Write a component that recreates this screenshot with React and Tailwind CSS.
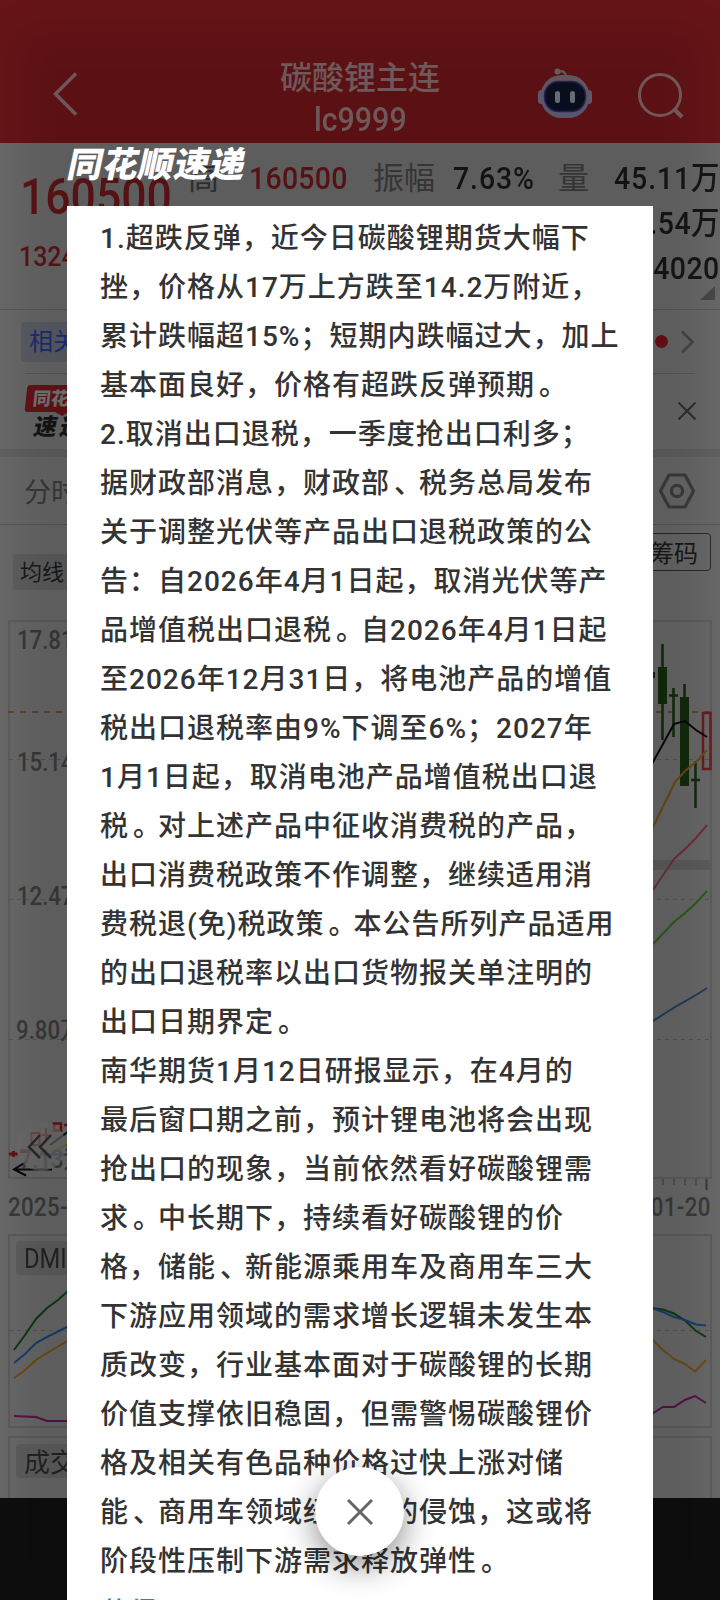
import clsx from 'clsx'

const lines = [
  '1.超跌反弹，近今日碳酸锂期货大幅下',
  '挫，价格从17万上方跌至14.2万附近，',
  '累计跌幅超15%；短期内跌幅过大，加上',
  '基本面良好，价格有超跌反弹预期。',
  '2.取消出口退税，一季度抢出口利多；',
  '据财政部消息，财政部、税务总局发布',
  '关于调整光伏等产品出口退税政策的公',
  '告：自2026年4月1日起，取消光伏等产',
  '品增值税出口退税。自2026年4月1日起',
  '至2026年12月31日，将电池产品的增值',
  '税出口退税率由9%下调至6%；2027年',
  '1月1日起，取消电池产品增值税出口退',
  '税。对上述产品中征收消费税的产品，',
  '出口消费税政策不作调整，继续适用消',
  '费税退(免)税政策。本公告所列产品适用',
  '的出口退税率以出口货物报关单注明的',
  '出口日期界定。',
  '南华期货1月12日研报显示，在4月的',
  '最后窗口期之前，预计锂电池将会出现',
  '抢出口的现象，当前依然看好碳酸锂需',
  '求。中长期下，持续看好碳酸锂的价',
  '格，储能、新能源乘用车及商用车三大',
  '下游应用领域的需求增长逻辑未发生本',
  '质改变，行业基本面对于碳酸锂的长期',
  '价值支撑依旧稳固，但需警惕碳酸锂价',
  '格及相关有色品种价格过快上涨对储',
  '能、商用车领域经济性的侵蚀，这或将',
  '阶段性压制下游需求释放弹性。',
]

const Num = ({ right, className, children }) => (
  <span
    className={clsx(
      'inline-block scale-x-[0.89] whitespace-nowrap font-medium leading-none',
      right ? 'origin-right' : 'origin-left',
      className
    )}
  >
    {children}
  </span>
)

const Robot = () => (
  <svg width="56" height="56" viewBox="0 0 56 56" fill="none">
    <defs>
      <linearGradient id="shell" x1="0" y1="0" x2="0" y2="1">
        <stop stopColor="#6e6064" />
        <stop offset="1" stopColor="#63607a" />
      </linearGradient>
    </defs>
    <path d="M20 6c6-2 9 0 9 6" stroke="#6b5f64" strokeWidth="2.5" />
    <circle cx="20.5" cy="5.5" r="3" fill="#756568" />
    <rect x="1" y="24" width="7" height="14" rx="3.5" fill="#6a647c" />
    <rect x="48" y="24" width="7" height="14" rx="3.5" fill="#6a647c" />
    <rect x="3.5" y="9" width="49" height="43" rx="21" fill="url(#shell)" />
    <rect x="7.5" y="15.5" width="41" height="30" rx="14" fill="#0b1022" stroke="#2b2660" strokeWidth="1.5" />
    <rect x="18" y="25" width="5" height="12" rx="2.5" fill="#777780" />
    <rect x="33" y="25" width="5" height="12" rx="2.5" fill="#777780" />
  </svg>
)

const Header = () => (
  <header className="h-[143px] shrink-0 bg-[#661417] pt-[60px]">
    <div className="flex h-[70px] items-start">
      <svg className="mt-3 ml-[52px]" width="28" height="44" viewBox="0 0 28 44" fill="none" stroke="#7d6062" strokeWidth="3.5">
        <path d="M24 1.5 3.5 22 24 42.5" />
      </svg>
      <div className="ml-[165px] flex w-[230px] flex-col items-center text-[#7c6365]">
        <div className="mt-px text-[32px] leading-[34px] font-medium">碳酸锂主连</div>
        <div className="mt-[8px] scale-x-[0.92] text-[33px] leading-[34px] font-medium">lc9999</div>
      </div>
      <div className="ml-[62px] mt-[6px]"><Robot /></div>
      <svg className="ml-[44px] mt-3" width="48" height="48" viewBox="0 0 48 48" fill="none" stroke="#7d6062" strokeWidth="3">
        <circle cx="23" cy="23" r="20.5" />
        <path d="m37.5 37.5 7.5 7.5" strokeWidth="4" />
      </svg>
    </div>
  </header>
)

const Quote = () => (
  <section className="flex h-[167px] shrink-0 border-b border-[#585858]">
    <div className="w-[188px] shrink-0 text-[#5f1417]">
      <Num className="mt-[29px] ml-[20px] text-[50px]">160500</Num>
      <Num className="mt-[21px] ml-[19px] text-[28px]">1324</Num>
    </div>
    <div className="flex min-w-0 flex-1 flex-col pt-[18px] text-[32px] text-[#161616]">
      <div className="flex h-[34px] items-center leading-none">
        <span className="w-[61px] shrink-0 text-[31px] text-[#343434]">高</span>
        <Num className="w-[124px] shrink-0 tracking-[0.3px] text-[#5f1417]">160500</Num>
        <span className="w-[80px] shrink-0 text-[31px] text-[#3c3c3c]">振幅</span>
        <Num className="w-[105px] shrink-0 tracking-[1px]">7.63%</Num>
        <span className="w-[56px] shrink-0 text-[31px] text-[#3c3c3c]">量</span>
        <Num className="shrink-0 tracking-[1px]">45.11万</Num>
      </div>
      <div className="mt-[11px] flex h-[34px] items-center justify-end leading-none">
        <Num right className="tracking-[0.5px]">1.54万</Num>
      </div>
      <div className="mt-[11px] flex h-[34px] items-center justify-end leading-none">
        <Num right className="tracking-[0.5px]">4020</Num>
      </div>
      <svg className="mt-px ml-[512px]" width="15" height="14">
        <path d="M15 0v14H0z" fill="#484848" />
      </svg>
    </div>
  </section>
)

const Related = () => (
  <section className="h-[139px] shrink-0">
    <div className="mx-[25px] flex h-[64px] items-center justify-between border-b border-[#585858]">
      <span className="-ml-1 flex h-10 items-center rounded bg-[#5b5d66] px-[8px] text-2xl text-[#1b2f78]">相关</span>
      <div className="flex items-center gap-[12px]">
        <span className="size-[13px] rounded-full bg-[#6b0f16]" />
        <svg width="15" height="24" fill="none" stroke="#464646" strokeWidth="2.5">
          <path d="M2 1.5 12.5 12 2 22.5" />
        </svg>
      </div>
    </div>
    <div className="flex h-[75px] items-start justify-between pr-[24px] pl-[26px]">
      <div className="pt-[11px]">
        <div className="flex h-[27px] w-[90px] -skew-x-6 items-center rounded-[3px] bg-[#661417] pl-[7px] text-[18px] leading-none font-black text-[#777]">
          同花顺
        </div>
        <svg className="ml-[29px] block" width="14" height="4">
          <path d="M0 0h14L7 4z" fill="#661417" />
        </svg>
        <div className="ml-[8px] -skew-x-12 text-[23px] leading-[24px] font-black tracking-[3px] text-[#161616]">速递</div>
      </div>
      <svg className="mt-[28px]" width="18" height="18" fill="none" stroke="#2f2f2f" strokeWidth="2">
        <path d="m.5.5 17 17m0-17-17 17" />
      </svg>
    </div>
  </section>
)

const Toolbar = () => (
  <>
    <div className="h-2 shrink-0 bg-[#606060]" />
    <div className="flex h-[68px] shrink-0 items-center justify-between border-b border-[#565656] pr-[25px] pl-[24px] text-[27px] text-[#3a3a3a]">
      <span className="pt-[5px]">分时</span>
      <svg width="36" height="36" viewBox="0 0 36 36" fill="none" stroke="#3c3c3c" strokeWidth="3.2" strokeLinejoin="round">
        <path d="M10 2h16l8.5 16L26 34H10L1.5 18z" />
        <circle cx="18" cy="18" r="5.6" />
      </svg>
    </div>
    <div className="flex h-[75px] shrink-0 items-start justify-between pr-[9px] pl-[13px] text-[#191919]">
      <span className="mt-[29px] flex h-9 items-center rounded bg-[#5e5e5e] px-[7px] pt-px text-[22px]">均线</span>
      <span className="mt-2 flex h-[38px] items-center rounded border border-[#2a2a2a] px-[12px] pt-[3px] text-2xl">筹码</span>
    </div>
  </>
)

const label = { fontSize: 25, fill: '#3a3a3a', fontWeight: 500 }

const PriceChart = () => (
  <svg className="block shrink-0" width="720" height="634" viewBox="0 600 720 634" fill="none">
    <rect x="9" y="621" width="702" height="557" stroke="#595959" strokeWidth="1.5" />
    <path d="M9 759.5h702M9 899.5h702M9 1039.5h702" stroke="#545454" strokeDasharray="4 4" />
    <path d="M8 712h703" stroke="#5a4630" strokeWidth="2" strokeDasharray="6 6" />
    <path d="M640 865h71" stroke="#5c5c5c" strokeWidth="10" />

    <g transform="scale(.89 1)" {...label}>
      <text x="19" y="649">17.81</text>
      <text x="19" y="771">15.14</text>
      <text x="19" y="905">12.47</text>
      <text x="18" y="1039">9.80万</text>
      <text x="22" y="1168">7.13万</text>
      <text x="9" y="1216" letterSpacing=".4">2025-10</text>
      <text x="798.5" y="1216" letterSpacing=".4" textAnchor="end">2026-01-20</text>
    </g>

    {/* candles */}
    <g fill="#122b0a" stroke="#122b0a" strokeWidth="2.5">
      <path d="M662.5 644v96M673.5 688v49M684.5 684v20M695.5 761v47M669 695.5h9M691 780h9M650 675h5" />
      <path stroke="none" d="M658 667h9v37h-9zM680 697h9v89h-9zM650 672h5v6h-5z" />
    </g>
    <rect x="703" y="713" width="7.5" height="56" stroke="#6a1c1f" strokeWidth="2.5" />

    <g strokeWidth="2">
      <path d="M640 785 653 762 674 724 685 721 696 730 707 737" stroke="#080808" />
      <path d="M640 852 653 827 675 782 685 771 696 762 707 750" stroke="#6b4a10" />
      <path d="M653 890 674 859 685 849 696 838 707 825" stroke="#702f3a" />
      <path d="M653 944 674 922 685 913 696 903 707 891" stroke="#2c5c1e" />
      <path d="M653 1021 664 1014 675 1007 696 995 707 988" stroke="#1d3d5a" />
    </g>

    {/* first candles of the range, under the scroll-back button */}
    <path d="M9 1154h9M13.5 1151v6" stroke="#6a1015" strokeWidth="3" />
    <path d="M54 1123.5h7v7h-7zM64 1125h5" stroke="#6a1015" strokeWidth="2.5" />
    <path d="M31.5 1133h8v12h-8zM46 1128v12M42 1135h7M20 1152h8" stroke="#6a1015" strokeWidth="2" />
    <path d="M50 1145 69 1131" stroke="#0a0a0a" strokeWidth="2" />
    <path d="M56 1150 69 1144" stroke="#6b4a10" strokeWidth="2" />
    <path d="M40 1154.5h29" stroke="#1d3d5a" strokeWidth="2" />
    <path d="M52 1169.5H14m11-7-11 7 12 6" stroke="#080808" strokeWidth="2" />
    <circle cx="41" cy="1146" r="25" fill="#6c6c6c" fillOpacity=".65" />
    <path d="m40 1135-11 12 11 11m11-23-11 12 11 11" stroke="#2b2b2b" strokeWidth="2.5" />

    <path d="M663 1179v6M674 1179v6M685 1179v6M696 1179v6" stroke="#4a4a4a" strokeWidth="1.5" />
    <path d="M706.5 1179v11" stroke="#3a3a3a" strokeWidth="2" />
  </svg>
)

const Indicators = () => (
  <>
    <div className="relative mx-2 h-[194px] shrink-0 border-2 border-[#5c5c5c]">
      <span className="absolute top-[5px] left-[6px] flex h-[34px] w-[70px] items-center rounded bg-[#5e5e5e] pt-[2px] pl-[8px] text-[27px] text-[#242424]">
        <span className="origin-left scale-x-[0.88]">DMI</span>
      </span>
      <svg className="absolute -top-[2px] -left-[2px]" width="704" height="194" viewBox="8 1234 704 194" fill="none" strokeWidth="2">
        <path d="M9 1330.5h702" stroke="#545454" strokeWidth="1" strokeDasharray="4 4" />
        <path d="M14 1350 25 1335 36 1319 47 1308 58 1300 69 1290M650 1308 663 1309.5 674 1313.5 685 1320.5 696 1331 706 1337" stroke="#113a12" />
        <path d="M14 1363 25 1354 36 1343 47 1337 69 1326M650 1307 663 1312 674 1317 685 1320 696 1324.5 706 1325.5" stroke="#163f73" />
        <path d="M14 1378 24 1371 36 1360 47 1353 69 1340M650 1337 663 1350 674 1359 685 1364 695 1371.5 706 1360" stroke="#6f4c12" />
        <path d="M14 1416 36 1417 47 1421 69 1421M650 1415 663 1407 674 1407 685 1400 695 1396 706 1403" stroke="#5a1048" />
      </svg>
    </div>
    <div className="mx-2 mt-2 flex h-[62px] shrink-0 border-2 border-b-0 border-[#5c5c5c] pt-[6px] pl-[6px]">
      <span className="flex h-[34px] items-center rounded bg-[#5e5e5e] px-[8px] pt-[5px] text-[26px] text-[#242424]">成交量</span>
    </div>
  </>
)

// 。 and 、 sit a little further from the preceding character
const Line = ({ text }) => (
  <p>
    {text.split(/([。、])/).map((s, i) =>
      i % 2 ? <span key={i} className="ml-[4px] tracking-[-3px]">{s}</span> : s
    )}
  </p>
)

const Article = () => (
  <div className="absolute top-[206px] left-[67px] h-[1394px] w-[586px] overflow-hidden bg-white pt-[8px] pl-[33px] text-[28px] leading-[49px] font-medium tracking-[1px] whitespace-nowrap text-[#333]">
    {lines.map((l) => <Line key={l} text={l} />)}
    <p className="mt-[3px] text-[#2d7fc1]">获得</p>
  </div>
)

export default function App() {
  return (
    <div className="relative h-[1600px] w-[720px] overflow-hidden bg-[#0e0e0e] font-['Roboto','Noto_Sans_CJK_SC',sans-serif]">
      <div className="flex h-[1498px] flex-col overflow-hidden bg-[#686868]">
        <Header />
        <Quote />
        <Related />
        <Toolbar />
        <PriceChart />
        <Indicators />
      </div>

      <div className="absolute inset-x-5 top-8 bottom-0 bg-black/10 blur-[18px]" />

      <div className="absolute top-[146px] left-[68px] -skew-x-12 text-[35px] leading-[40px] font-black tracking-[0.6px] text-white">
        同花顺速递
      </div>
      <Article />

      <button className="absolute top-[1467px] left-[315px] flex size-[89px] items-center justify-center rounded-full bg-white shadow-[0_10px_32px_rgba(0,0,0,0.45)]">
        <svg width="26" height="26" fill="none" stroke="#666" strokeWidth="3">
          <path d="m1 1 24 24m0-24L1 25" />
        </svg>
      </button>
    </div>
  )
}
